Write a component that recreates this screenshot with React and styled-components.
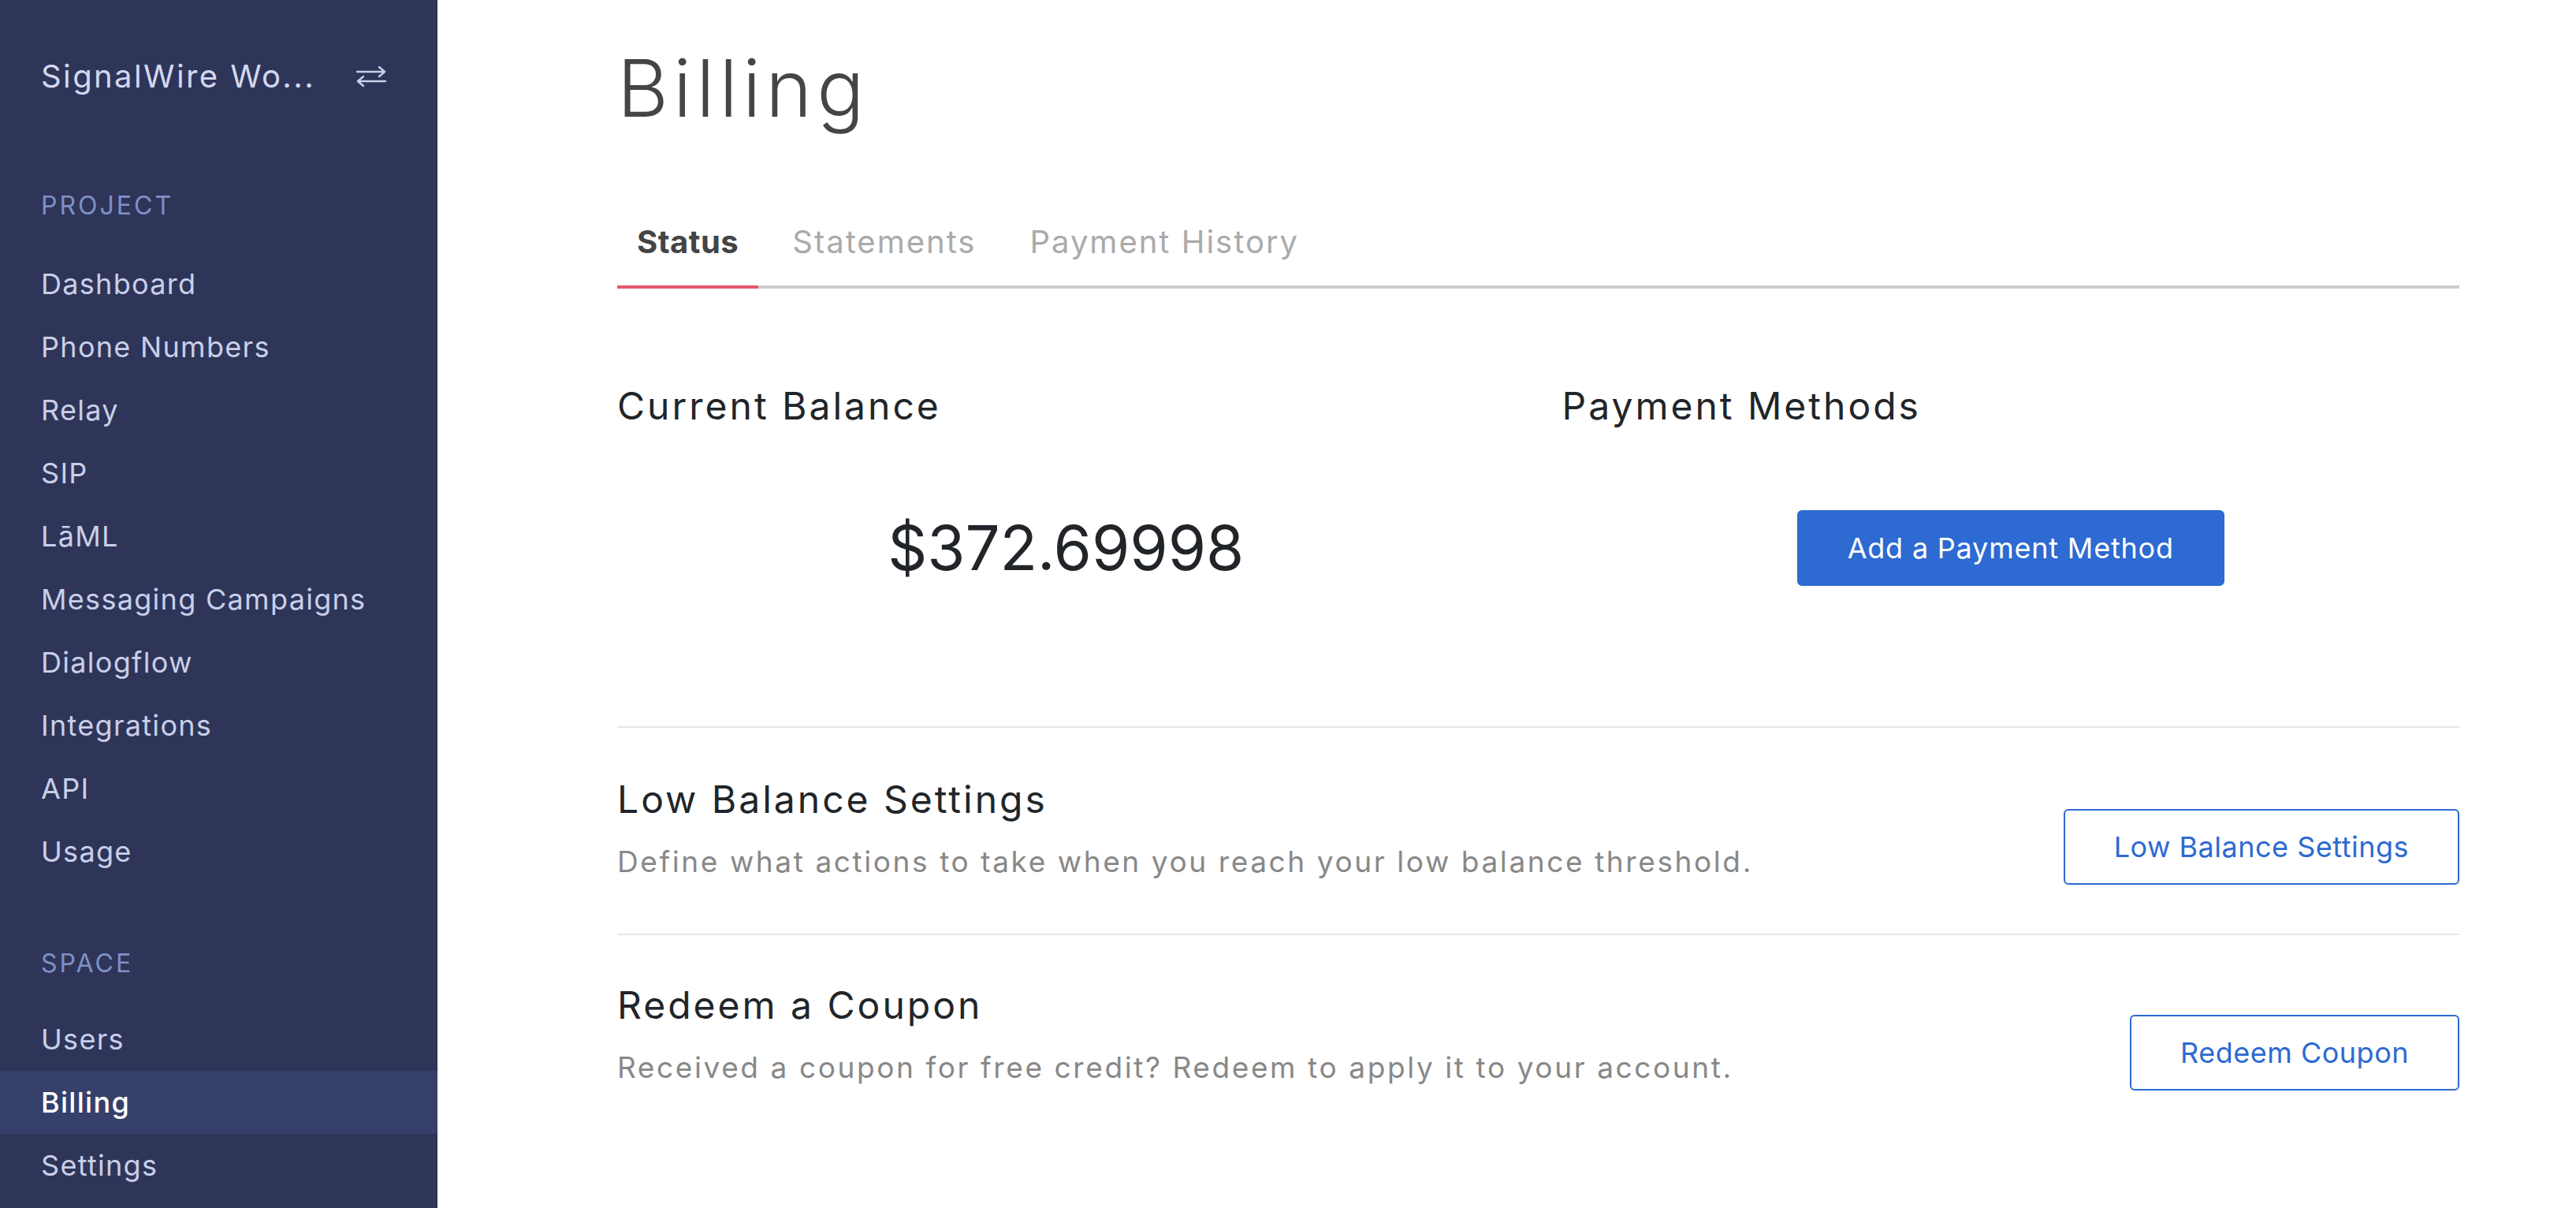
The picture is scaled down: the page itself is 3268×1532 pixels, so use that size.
import React from "react";
import styled, { createGlobalStyle } from "styled-components";

const GlobalStyle = createGlobalStyle`
  html, body { margin: 0; padding: 0; }
  body {
    font-family: Inter, "Noto Sans", "DejaVu Sans", sans-serif;
    background: #ffffff;
    -webkit-font-smoothing: antialiased;
  }
  * { box-sizing: border-box; }
`;

const Page = styled.div`
  display: flex;
  min-height: 100vh;
`;

const Sidebar = styled.aside`
  width: 555px;
  flex-shrink: 0;
  background: #2e3559;
  padding-top: 73px;
  display: flex;
  flex-direction: column;
`;

const Workspace = styled.div`
  display: flex;
  align-items: center;
  justify-content: space-between;
  padding: 0 64px 0 52px;
  height: 48px;
`;

const WorkspaceName = styled.span`
  font-size: 40px;
  line-height: 48px;
  color: #d3d8ef;
  letter-spacing: 2.4px;
  white-space: nowrap;
`;

const SectionLabel = styled.div`
  margin-top: ${(p) => p.$top}px;
  margin-bottom: ${(p) => p.$bottom}px;
  padding-left: 52px;
  font-size: 32px;
  line-height: 40px;
  letter-spacing: 3px;
  color: #8090c6;
  text-transform: uppercase;
`;

const NavList = styled.nav`
  display: flex;
  flex-direction: column;
`;

const NavItem = styled.a`
  display: flex;
  align-items: center;
  height: 80px;
  padding-left: 52px;
  font-size: 36px;
  letter-spacing: 1.3px;
  color: ${(p) => (p.$active ? "#ffffff" : "#c9cfe8")};
  font-weight: ${(p) => (p.$active ? 500 : 400)};
  background: ${(p) => (p.$active ? "#36406b" : "transparent")};
  text-decoration: none;
`;

const Main = styled.main`
  flex: 1;
  padding: 52px 148px 60px 228px;
`;

const Title = styled.h1`
  margin: 0;
  font-size: 100px;
  line-height: 120px;
  font-weight: 300;
  color: #454545;
  letter-spacing: 6px;
`;

const TabList = styled.div`
  display: flex;
  margin-top: 95px;
  border-bottom: 4px solid #cccccc;
`;

const Tab = styled.div`
  padding: 16px 25px 31px;
  margin-right: 18px;
  margin-bottom: -4px;
  font-size: 40px;
  line-height: 48px;
  letter-spacing: ${(p) => (p.$active ? "0.5px" : "2px")};
  font-weight: ${(p) => (p.$active ? 700 : 400)};
  color: ${(p) => (p.$active ? "#444444" : "#aaaaaa")};
  border-bottom: 4px solid ${(p) => (p.$active ? "#e6566f" : "transparent")};
`;

const Overview = styled.section`
  display: grid;
  grid-template-columns: 1fr 1fr;
  column-gap: 60px;
  row-gap: 103px;
  align-items: center;
  margin-top: 120px;
`;

const Heading = styled.h2`
  margin: 0;
  font-size: 48px;
  line-height: 57.6px;
  font-weight: 400;
  color: #212529;
  letter-spacing: 3px;
`;

const Balance = styled.div`
  justify-self: center;
  font-size: 78px;
  line-height: 94px;
  font-weight: 400;
  color: #212529;
`;

const Button = styled.button`
  justify-self: center;
  font-family: inherit;
  font-size: 36px;
  line-height: 54px;
  letter-spacing: 0.8px;
  padding: 19px 62px;
  border-radius: 6px;
  border: 2px solid #2d6ad1;
  background: ${(p) => (p.$primary ? "#2d6ad1" : "#ffffff")};
  color: ${(p) => (p.$primary ? "#ffffff" : "#2d6ad1")};
  cursor: pointer;
  white-space: nowrap;
`;

const Settings = styled.div`
  margin-top: 178px;
`;

const SettingRow = styled.div`
  display: flex;
  justify-content: space-between;
  align-items: flex-start;
  border-top: 2px solid #e6e6e6;
  padding: ${(p) => p.$top}px 0 62px;
`;

const SettingText = styled.div`
  display: flex;
  flex-direction: column;
`;

const Description = styled.p`
  margin: 29px 0 0;
  font-size: 37px;
  line-height: 43px;
  color: #888888;
  letter-spacing: 2.6px;
`;

const RowButton = styled(Button)`
  margin-top: 41px;
  letter-spacing: 0.5px;
`;

const SwapIcon = () => (
  <svg width="40" height="30" viewBox="0 0 40 30" fill="none" stroke="#c9cfe8" strokeWidth="2.4" strokeLinecap="round" strokeLinejoin="round">
    <path d="M2 9H37" />
    <path d="M30 3L37 9L30 15" />
    <path d="M38 21H3" />
    <path d="M10 15L3 21L10 27" />
  </svg>
);

const projectItems = [
  "Dashboard",
  "Phone Numbers",
  "Relay",
  "SIP",
  "LāML",
  "Messaging Campaigns",
  "Dialogflow",
  "Integrations",
  "API",
  "Usage",
];

const spaceItems = ["Users", "Billing", "Settings"];

export default function App() {
  return (
    <>
      <GlobalStyle />
      <Page>
        <Sidebar>
          <Workspace>
            <WorkspaceName>SignalWire Wo...</WorkspaceName>
            <SwapIcon />
          </Workspace>
          <SectionLabel $top={120} $bottom={39}>Project</SectionLabel>
          <NavList>
            {projectItems.map((item) => (
              <NavItem key={item}>{item}</NavItem>
            ))}
          </NavList>
          <SectionLabel $top={82} $bottom={36}>Space</SectionLabel>
          <NavList>
            {spaceItems.map((item) => (
              <NavItem key={item} $active={item === "Billing"}>
                {item}
              </NavItem>
            ))}
          </NavList>
        </Sidebar>
        <Main>
          <Title>Billing</Title>
          <TabList>
            <Tab $active>Status</Tab>
            <Tab>Statements</Tab>
            <Tab>Payment History</Tab>
          </TabList>
          <Overview>
            <Heading>Current Balance</Heading>
            <Heading>Payment Methods</Heading>
            <Balance>$372.69998</Balance>
            <Button $primary>Add a Payment Method</Button>
          </Overview>
          <Settings>
            <SettingRow $top={62}>
              <SettingText>
                <Heading>Low Balance Settings</Heading>
                <Description>
                  Define what actions to take when you reach your low balance threshold.
                </Description>
              </SettingText>
              <RowButton>Low Balance Settings</RowButton>
            </SettingRow>
            <SettingRow $top={60}>
              <SettingText>
                <Heading>Redeem a Coupon</Heading>
                <Description>
                  Received a coupon for free credit? Redeem to apply it to your account.
                </Description>
              </SettingText>
              <RowButton>Redeem Coupon</RowButton>
            </SettingRow>
          </Settings>
        </Main>
      </Page>
    </>
  );
}
